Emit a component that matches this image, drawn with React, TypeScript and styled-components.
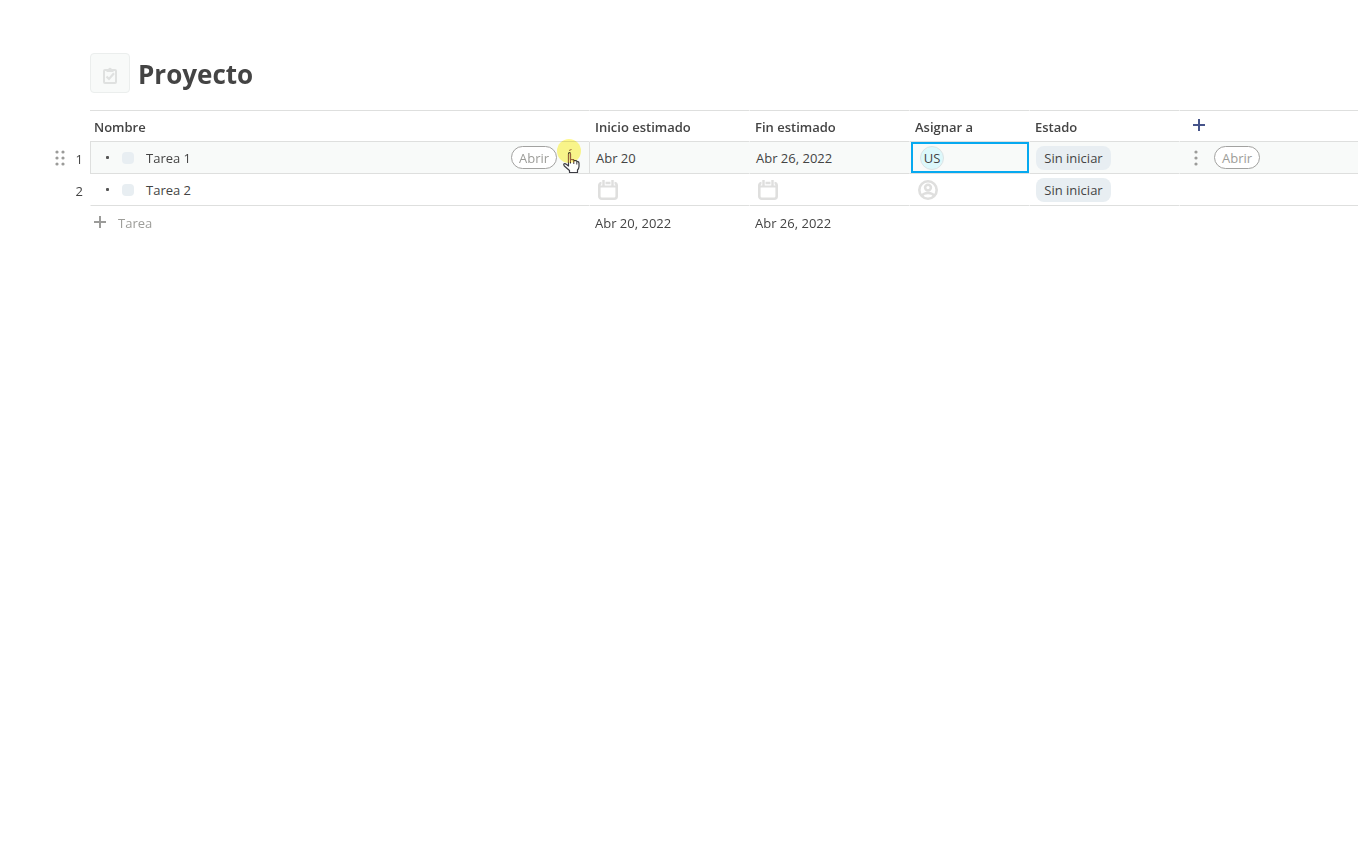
import React from "react";
import styled, { createGlobalStyle } from "styled-components";

const LINE = "#dedfde";
const HOVER = "#f8faf9";

const GlobalStyle = createGlobalStyle`
  * { box-sizing: border-box; }
  body {
    margin: 0;
    background: #fff;
    color: #444;
    font-family: "Segoe UI", "Open Sans", "Noto Sans", sans-serif;
    font-size: 13px;
    line-height: 20px;
  }
  button { font: inherit; color: inherit; cursor: pointer; }
`;

const Page = styled.main`
  padding: 53px 0 0 50px;
  overflow-x: hidden;
`;

const Header = styled.header`
  display: flex;
  align-items: center;
  gap: 8px;
  height: 40px;
  margin: 0 0 17px 40px;
`;

const ListIcon = styled.button`
  display: grid;
  place-items: center;
  width: 40px;
  height: 40px;
  padding: 5px 0 0;
  border: 1px solid #ebeeed;
  border-radius: 4px;
  background: ${HOVER};
`;

const Title = styled.h1`
  margin: 0;
  padding-top: 2px;
  font-size: 26px;
  line-height: 36px;
  font-weight: 700;
`;

const Table = styled.table`
  width: 100%;
  table-layout: fixed;
  border-collapse: separate;
  border-spacing: 0;
`;

const Col = styled.col<{ $w?: number }>`
  width: ${(p) => (p.$w ? `${p.$w}px` : "auto")};
`;

const HeadCell = styled.th`
  height: 32px;
  padding: 2px 0 0 5px;
  border: solid ${LINE};
  border-width: 1px 0;
  border-left: 1px solid #fff;
  text-align: left;
  font-weight: 600;
  white-space: nowrap;
  &:nth-child(2) {
    padding-left: 4px;
    border-left: 0;
  }
  &:last-child { padding-top: 0; }
`;

const Gutter = styled.td`
  height: 32px;
  padding: 0 7px 0 5px;
`;

const GutterInner = styled.div`
  display: flex;
  align-items: center;
  justify-content: flex-end;
  padding-top: 2px;
`;

const Handle = styled.button`
  display: flex;
  margin: 0 auto 2px 0;
  padding: 0;
  border: 0;
  background: none;
`;

const Cell = styled.td<{ $active?: boolean; $ruled?: boolean; $flush?: boolean }>`
  position: relative;
  height: 32px;
  padding: ${(p) => (p.$flush ? "0" : "0 0 0 6px")};
  border-bottom: 1px solid ${LINE};
  border-left: 1px solid ${(p) => (p.$ruled ? LINE : p.$active ? HOVER : "#fff")};
  background: ${(p) => (p.$active ? HOVER : "#fff")};
  white-space: nowrap;
`;

const NameLine = styled.div`
  display: flex;
  align-items: center;
  padding: 0 32px 0 9px;
`;

const Bullet = styled.span`
  width: 3px;
  height: 3px;
  margin-right: 13px;
  border-radius: 1px;
  background: #555;
`;

const Status = styled.button`
  width: 12px;
  height: 12px;
  margin-right: 12px;
  padding: 0;
  border: 0;
  border-radius: 4px;
  background: #e8eef2;
`;

const OpenButton = styled.button`
  height: 23px;
  width: 46px;
  padding: 0;
  border: 1px solid #a2a2a0;
  border-radius: 12px;
  background: #fff;
  color: #9d9d99;
  line-height: 20px;
`;

const Push = styled.span`
  margin-left: auto;
  display: flex;
`;

const Pointer = styled.svg`
  position: absolute;
  top: -4px;
  right: 6px;
  pointer-events: none;
`;

const Selected = styled.div`
  display: flex;
  align-items: center;
  height: 31px;
  margin: 0 0 0 1px;
  padding-left: 7px;
  border: 2px solid #06a9f0;
`;

const Avatar = styled.span`
  display: grid;
  place-items: center;
  width: 24px;
  height: 24px;
  border: 1px solid #dce3e4;
  border-radius: 50%;
  background: #dcf8fb;
`;

const Tag = styled.button`
  display: block;
  width: 75px;
  height: 24px;
  padding: 0;
  border: 0;
  border-radius: 8px;
  background: #e8eef2;
`;

const IconButton = styled.button`
  display: flex;
  padding: 0;
  border: 0;
  background: none;
`;

const Empty = styled.div`
  display: flex;
  padding-left: 2px;
`;

const Actions = styled.div`
  display: flex;
  align-items: center;
  gap: 16px;
  padding-left: 8px;
`;

const FootCell = styled.td`
  height: 34px;
  padding: 0 0 0 6px;
  white-space: nowrap;
`;

const AddTask = styled.button`
  display: flex;
  align-items: center;
  gap: 12px;
  margin-left: -2px;
  padding: 0;
  border: 0;
  background: none;
  color: #9d9d99;
`;

const Dots = ({ cols }: { cols: number[] }) => (
  <svg width={cols.length * 6 - 2} height="16" fill="#9b9b99" aria-hidden>
    {cols.map((x) => [2, 8, 14].map((y) => <circle key={`${x}-${y}`} cx={x} cy={y} r="1.6" />))}
  </svg>
);

const Plus = ({ color }: { color: string }) => (
  <svg width="12" height="14" stroke={color} strokeWidth="2" aria-hidden>
    <path d="M6 0V12M0 6H12" />
  </svg>
);

const CalendarIcon = () => (
  <svg width="20" height="20" fill="none" stroke="#dfdfde" aria-hidden>
    <rect x="1.3" y="3" width="17.4" height="15.7" rx="2.5" strokeWidth="2.6" />
    <path d="M1 6.5H19" strokeWidth="2" />
    <path d="M5.5 0V5M14.5 0V5" stroke="#fff" strokeWidth="4" />
    <path d="M5.5 0V6M14.5 0V6" strokeWidth="2.4" />
  </svg>
);

const PersonIcon = () => (
  <svg width="20" height="20" fill="none" stroke="#dfdfde" strokeWidth="2.6" aria-hidden>
    <circle cx="10" cy="10" r="8.7" />
    <circle cx="10" cy="7.6" r="2.9" />
    <path d="M3.5 16C5 13.8 7.5 13 10 13S15 13.8 16.5 16" />
  </svg>
);

const ClipboardIcon = () => (
  <svg width="14" height="17" fill="none" stroke="#dfe1e0" strokeWidth="2" aria-hidden>
    <rect x="1" y="3" width="12" height="13" rx="1" />
    <path d="M3.5 2.2H5Q7 -0.6 9 2.2H10.5V5H3.5Z" fill="#dfe1e0" stroke="none" />
    <path d="M3.5 9.5L6 12L11 6.2" strokeWidth="2.2" />
  </svg>
);

const HandPointer = () => (
  <Pointer width="26" height="37" viewBox="0 0 26 37" aria-hidden>
    <path
      d="M11.5 16Q11.5 14.5 12.5 14.5T13.5 16V21.5L16 21.7Q16.7 21.8 17 22.4L19 22.7Q19.7 22.9 20 23.4L21 23.6Q22 24 22 25.2V28.5Q21.9 30.5 20.5 32V34.5H12.5V32.5L7.3 28Q6.2 26.3 7.2 25.7Q8.2 25.3 9.6 26.5L11.5 28Z"
      fill="#fff"
      stroke="#3c3c44"
      strokeWidth="1.2"
      strokeLinejoin="round"
    />
    <path d="M13.5 21V25.5M16.8 22.5V26M19.8 23.5V26.5" stroke="#3c3c44" />
    <circle cx="12" cy="13" r="12" fill="#fff98c" style={{ mixBlendMode: "multiply" }} />
    <path d="M11.5 16V24.5M13.5 15V24M13.5 21.5H16.5V24.5M12 12.5L14.5 11.5" stroke="#97623a" fill="none" />
  </Pointer>
);

const HEADINGS = ["Nombre", "Inicio estimado", "Fin estimado", "Asignar a", "Estado"];

export default function App() {
  return (
    <>
      <GlobalStyle />
      <Page>
        <Header>
          <ListIcon aria-label="Icono del proyecto"><ClipboardIcon /></ListIcon>
          <Title>Proyecto</Title>
        </Header>
        <Table>
          <colgroup>
            <Col $w={40} />
            <Col $w={499} />
            <Col $w={160} />
            <Col $w={160} />
            <Col $w={120} />
            <Col $w={150} />
            <Col />
          </colgroup>
          <thead>
            <tr>
              <td />
              {HEADINGS.map((h) => <HeadCell key={h} scope="col">{h}</HeadCell>)}
              <HeadCell scope="col">
                <Actions>
                  <IconButton aria-label="Agregar columna"><Plus color="#46548a" /></IconButton>
                </Actions>
              </HeadCell>
            </tr>
          </thead>
          <tbody>
            <tr>
              <Gutter>
                <GutterInner>
                  <Handle aria-label="Mover tarea"><Dots cols={[2, 8]} /></Handle>
                  1
                </GutterInner>
              </Gutter>
              <Cell $active $ruled>
                <NameLine>
                  <Bullet />
                  <Status aria-label="Estado de Tarea 1" />
                  Tarea 1
                  <Push><OpenButton>Abrir</OpenButton></Push>
                </NameLine>
                <HandPointer />
              </Cell>
              <Cell $active $ruled>Abr 20</Cell>
              <Cell $active>Abr 26, 2022</Cell>
              <Cell $active $flush>
                <Selected><Avatar>US</Avatar></Selected>
              </Cell>
              <Cell $active><Tag>Sin iniciar</Tag></Cell>
              <Cell $active>
                <Actions>
                  <IconButton aria-label="Más opciones"><Dots cols={[2]} /></IconButton>
                  <OpenButton>Abrir</OpenButton>
                </Actions>
              </Cell>
            </tr>
            <tr>
              <Gutter><GutterInner>2</GutterInner></Gutter>
              <Cell>
                <NameLine>
                  <Bullet />
                  <Status aria-label="Estado de Tarea 2" />
                  Tarea 2
                </NameLine>
              </Cell>
              <Cell><Empty><IconButton aria-label="Inicio estimado"><CalendarIcon /></IconButton></Empty></Cell>
              <Cell><Empty><IconButton aria-label="Fin estimado"><CalendarIcon /></IconButton></Empty></Cell>
              <Cell><Empty><IconButton aria-label="Asignar a"><PersonIcon /></IconButton></Empty></Cell>
              <Cell><Tag>Sin iniciar</Tag></Cell>
              <Cell />
            </tr>
          </tbody>
          <tfoot>
            <tr>
              <td />
              <FootCell><AddTask><Plus color="#9b9b99" />Tarea</AddTask></FootCell>
              <FootCell>Abr 20, 2022</FootCell>
              <FootCell>Abr 26, 2022</FootCell>
            </tr>
          </tfoot>
        </Table>
      </Page>
    </>
  );
}
